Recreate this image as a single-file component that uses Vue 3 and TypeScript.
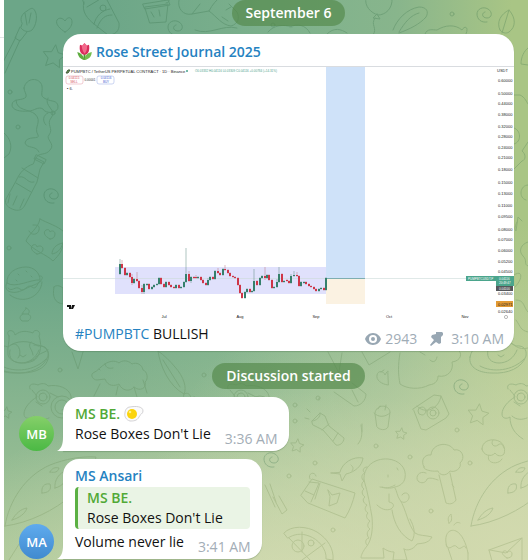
<script setup lang="ts">
type Step = [x: number, open: number, close: number, high?: number, low?: number]

interface Candle {
  x: number
  top: number
  height: number
  high: number
  low: number
  up: boolean
}

// Daily moves in chart units: x, open, close and, where they stand out, the wick ends.
const steps: Step[] = [
  [57, 208, 198, 193], [59, 198, 202, 194], [62, 202, 209], [64, 209, 207], [67, 207, 211],
  [69, 211, 217, 208, 219], [71, 217, 213], [74, 213, 215, 206], [76, 215, 222], [79, 222, 226, 219, 228],
  [81, 226, 218, 217, 228], [84, 219, 218], [86, 218, 223], [89, 223, 221], [91, 221, 219],
  [94, 219, 218], [96, 218, 212, 211], [98, 212, 218], [101, 218, 221], [103, 221, 216],
  [106, 216, 219], [108, 219, 221], [111, 221, 222], [113, 222, 219], [116, 219, 222],
  [118, 222, 221], [121, 221, 216], [123, 216, 208, 182], [126, 208, 215, 205], [128, 215, 211, 210, 217],
  [131, 211, 212], [133, 211, 212, 209], [135, 212, 211], [138, 211, 214], [140, 214, 217],
  [143, 217, 219], [145, 219, 214, 212, 220], [147, 214, 211], [150, 211, 213], [152, 213, 205],
  [155, 205, 207, 202], [157, 207, 209], [160, 209, 203], [162, 203, 204, 199], [165, 204, 207],
  [167, 207, 210], [170, 210, 211], [172, 211, 212], [175, 212, 219], [177, 219, 227],
  [179, 227, 232, 226, 233], [182, 232, 226], [184, 226, 223], [187, 223, 226], [189, 226, 225],
  [191, 225, 215, 203], [194, 215, 219], [197, 219, 212], [199, 212, 210], [202, 210, 212, 201, 214],
  [204, 212, 209], [206, 209, 214], [209, 214, 222], [211, 222, 221], [214, 221, 216, 213],
  [216, 216, 208, 201], [219, 208, 216], [221, 216, 215], [224, 214, 215], [226, 215, 217],
  [228, 217, 210, 208], [231, 210, 209, 205], [234, 209, 210, 206], [236, 210, 220], [238, 220, 216],
  [241, 217, 216], [243, 216, 218], [246, 218, 220], [248, 220, 221], [251, 221, 223],
  [253, 223, 225], [256, 225, 223, 222, 226], [258, 223, 222], [261, 222, 224], [263, 224, 212, 211, 225],
]

const candles: Candle[] = steps.map(([x, open, close, high, low]) => ({
  x,
  top: Math.min(open, close),
  height: Math.max(1, Math.abs(close - open)),
  high: high ?? Math.min(open, close) - 1,
  low: low ?? Math.max(open, close) + 1,
  up: close < open,
}))

const prices: { y: number; label: string }[] = [
  { y: 16, label: '0.60000' }, { y: 29, label: '0.50000' }, { y: 39, label: '0.44000' },
  { y: 50, label: '0.38000' }, { y: 62, label: '0.32000' }, { y: 72, label: '0.28000' },
  { y: 83, label: '0.24000' }, { y: 93, label: '0.21000' }, { y: 105, label: '0.18000' },
  { y: 118, label: '0.15000' }, { y: 129, label: '0.13000' }, { y: 141, label: '0.11000' },
  { y: 152, label: '0.09500' }, { y: 165, label: '0.08000' }, { y: 175, label: '0.07000' },
  { y: 186, label: '0.06000' }, { y: 197, label: '0.05200' }, { y: 207, label: '0.04500' },
  { y: 229, label: '0.03400' }, { y: 247, label: '0.02640' },
]

const months = [
  { x: 101, label: 'Jul' }, { x: 177, label: 'Aug' }, { x: 253, label: 'Sep' },
  { x: 326, label: 'Oct' }, { x: 402, label: 'Nov' },
]

const dots: [number, number][] = [
  [10, 92], [53, 113], [18, 127], [9, 248], [60, 370], [204, 375], [452, 14], [273, 25],
  [315, 463], [295, 421], [376, 446], [410, 457], [457, 430], [470, 463], [333, 530],
  [431, 511], [289, 476], [295, 405], [318, 398],
]
const stars: [number, number, number][] = [
  [54, 57, 12], [478, 415, 11], [401, 434, 6], [297, 446, 7], [6, 413, 6],
]
const swirls: [number, number][] = [[51, 195], [175, 27], [484, 14], [461, 386], [271, 459]]

function starPath(cx: number, cy: number, r: number): string {
  const points = Array.from({ length: 10 }, (_, i) => {
    const a = (Math.PI / 5) * i - Math.PI / 2 + 0.15
    const d = i % 2 ? r * 0.5 : r
    return `${(cx + d * Math.cos(a)).toFixed(1)} ${(cy + d * Math.sin(a)).toFixed(1)}`
  })
  return `M${points.join('L')}Z`
}
</script>

<template>
  <div class="page">
    <main class="chat">
      <svg class="doodles" viewBox="0 0 528 560" preserveAspectRatio="xMinYMin slice" aria-hidden="true">
        <defs>
          <linearGradient id="ink" gradientUnits="userSpaceOnUse" x1="0" y1="0" x2="120" y2="560">
            <stop offset="0" stop-color="#2f6b45" />
            <stop offset=".6" stop-color="#4b7d50" />
            <stop offset="1" stop-color="#7f955a" />
          </linearGradient>
          <g id="bear">
            <path d="M30 389c-2-5 3-6 8-4c3-2 8-2 10 1c10-2 21 2 23 10c1 8-3 12-9 14M32 390c2 3 4 4 5 7c-7 4-13 11-13 17c0 5 5 5 8 3c0 10 5 17 13 22" />
            <circle cx="43" cy="397" r="7" /><circle cx="43" cy="397" r="4" />
            <circle cx="62" cy="407" r="11" /><circle cx="62" cy="407" r="7" />
            <path d="M50 393l8 4M36 402l6 4M34 416c4 4 10 4 15 2" />
          </g>
          <g id="leaf">
            <path d="M5 526c4-25 20-50 45-61c15-6 32-9 46-8c-3 13-12 27-24 38c-17 15-43 28-67 31Z" />
            <path d="M12 520c4-7 9-11 15-12c-2 6-8 10-15 12ZM42 493c-1-6 2-10 8-9c2 6-2 9-8 9ZM55 488c-1-8 4-15 12-18c1 9-3 16-12 18ZM50 472c2-4 5-5 9-4c-1 4-4 5-9 4Z" />
          </g>
          <g id="cat">
            <path d="M-8 357c2-10 9-13 16-10c8-7 22-7 30-1c8-1 11 4 10 10c-4 12-18 18-34 17c-12 0-24-5-22-16Z" />
            <path d="M10 350c-2 8 3 13 11 13s15-5 18-13M2 366c12 7 33 5 44-7M20 355l3 2l3-2" />
          </g>
        </defs>

        <circle v-for="([x, y], i) in dots" :key="'d' + i" :cx="x" :cy="y" r="2" />
        <path v-for="([x, y, r], i) in stars" :key="'s' + i" :d="starPath(x, y, r)" />
        <path
          v-for="([x, y], i) in swirls" :key="'w' + i" :transform="`translate(${x} ${y})`"
          d="M3 8c-6 1-10-3-10-8s6-8 11-5s4 9-1 9s-6-5-2-6"
        />

        <!-- brush, heart, pencil, cactus -->
        <path d="M22 23c-3-5 1-10 5-12c4-3 6-4 8 0c3 5 1 15-3 19c-4 3-9 1-11-2ZM20 27l-5 11l5 3l7-9M16 37L-1 70M20 40L5 73M25 13l2 12M31 13l-2 10" />
        <path d="M65 32c-5-3-10-8-8-12c2-3 6-2 8 1c3-5 7-4 7 1c0 4-3 8-7 10Z" />
        <path d="M84 2c-3 10 4 17 10 22l14 11c7 0 12-4 11-12L106-2M87 7l15-9M94 24c2-8 8-14 16-15M97 28c4-10 8-13 15-13M84 4l-2-6M100 8a3 3 0 1 0 6 0a3 3 0 1 0-6 0" />
        <path d="M145 7l23-3l-2 18l-16 1ZM143 4l25-4l2 5l-25 4ZM147-3c-8 1-9-7-5-10M162 0c7-4 10 2 4 3M151 12l3 5M159 10l1 6" />
        <path d="M179 0c-2 8 4 16 13 14l17-3c3-6 8-12 13-15M192 14l8-10M209 11c8 6 13 14 22 15c7-2 9-8 6-14l-8-8M222 17l6 4M226 10l5-3M195 30c15 6 27-6 42-2" />
        <path d="M290 27c7-4 16-2 20 6M268 32c6-7 15-8 24-5M327 34c7-7 14-5 20-1" />

        <!-- balloon, leaf, airship -->
        <path d="M366-2c-2 8 5 15 12 17c7 0 15-6 14-17M377 14l-4 4l7 1l-3-5M375 18c-5 7 3 10-2 17" />
        <path d="M393 30c4-11 14-21 26-23c8 0 10 5 7 10c-6 7-16 12-27 16M399 32c6-10 12-17 20-19M425 34c2-6 8-4 12-4c8-5 18-6 25 0c3-5 7-3 4 4" />
        <path d="M500 30c-4-8 1-16 9-20c7 8 7 17 0 22c-3 2-7 1-9-2ZM509 10l-7 23M528 48c-4 3-7 9-7 16l7 1" />

        <!-- balloon dog, bottle, pillow -->
        <path d="M24 88c2-11 16-11 18-2c1 7-3 10 4 13c6 3 11 1 12 7c1 8-13 8-15 3c-5-3-9 2-14 2c-9 1-17-1-17-6c0-7 11-4 14-8c1-3-2-5-2-9ZM48 113c-5 2-6 8-2 12" />
        <path d="M16 100c0 11 13 9 19 14c8 8-2 13 3 21c3 5-12 0-13 8c2 6 11 2 14 9M48 98c-5 8 10 12 3 20c-5 6 3 11-2 17c-4 4 7 9 1 15c-4 6-12 2-14 8" />
        <path d="M36 158l8 4l-4 7l-3 13l-12 23c-2 4-5 6-10 5c-7-2-11-6-9-11l10-18c4-9 9-14 17-17ZM36 155l-2 4l10 5l2-4ZM22 168l16 10M16 183l15 9M19 177c7-2 8 7 15 5M10 194l-2 9M17 196l-4 9M24 199l-4 9" />
        <path d="M40 219c7 4 18 7 24 13c-1 9 2 17-11 29c-7-7-18-9-27-20c3-8 12-12 14-22ZM50 239c-6-3-7-7-4-9c2-1 4 0 4 2c2-2 5-1 5 2s-2 5-5 5ZM37 254c-6-3-7-7-4-9c2-1 4 0 4 2c2-2 6-1 6 2c0 3-3 5-6 5ZM33 225c4 0 7 0 6 5s-8 6-10 1M63 243c-8 1-11 7-11 11c5-1 9-4 11-11M4 133c6 5 9 13 5 21l-5 4" />
        <!-- burger, poop, hamster -->
        <path d="M7 283c-1-10 9-16 19-16c8 0 14 6 14 13c-9-1-25 9-33 3ZM40 276c6 0 0 7-6 9c-9 3-15 9-23 7c-6-1-6-7-4-9M8 288c4 5 7-3 12 1s7-6 12-2s5-6 9-6M10 295c13 10 31 2 32-13M18 274l1 1M26 271l1 1M31 276l1 1M16 280l1 1" />
        <path d="M26 308c5 2 3 5 2 6c4 2 3 5 0 7H22c-4-3-1-6 1-7c-1-3 3-3 3-6ZM22 314h6M54 287c2-2 5-2 9 1v16c-8-1-11-7-9-17Z" />
        <path d="M9 336c-5-6 5-8 6-1c6-5 12-4 18-2c1-5 9-2 6 3c4 12 0 22-6 25c-9 4-23 2-25-6c-1-8 2-14 1-19ZM31 342c-4 5 1 6 2 13M34 345c10-1 17 6 14 14c-4 15-27 16-44 12M48 350c-6 4-10 3-13 9l-10 4M11 345c7-5 12 8 7 13" />

        <use href="#bear" /><use href="#bear" x="198" />
        <use href="#leaf" />
        <use href="#cat" />
        <g transform="translate(478 0)"><use href="#bear" /></g>
        <g transform="translate(466 0)"><use href="#leaf" /></g>
        <g transform="translate(478 0)"><use href="#cat" /></g>

        <!-- sheep, carrot, ice cream -->
        <path d="M105 364c-4 2-7 7-12 9c-3 2 0 7 4 7l8-1c3 8 10 7 14 5c3 7 11 8 15 3c6 5 13 1 11-5c4-3 2-11-2-12c-1-6-7-8-11-6c-4-4-10-4-13-1c-4-3-10-2-14 1ZM105 364c1 4 4 5 8 4M99 369l1 1M100 384l-6 12M118 386l-2 9M134 387l3 10M143 380l4 13M72 352l6 17l5-17" />
        <path d="M158 351c2 15 11 35 26 43c3-6 0-17-9-27c-5-6-11-12-17-16ZM163 360l17 27M184 394c-2 4 2 5 4 4c5 1 6-3 8 0M184 394c4-2 6 0 7 4" />
        <path d="M328 352l13 25l4-3M338 378l4-25M334 392l20 14c7 0 12-6 12-12l-14-11M352 390l6 12M362 352l7 13l21-13" />

        <!-- cloud, heart, mug, envelope with cogs -->
        <path d="M400 353c-2 12-2 21 0 31c7 5 20 6 29 1c8-1 9-6 9-9c10 2 16-6 14-14c9-1 11-9 6-12M430 360c3 3 6 2 7-3M420 352l5 3" />
        <path d="M388 385c-7-1-12-5-11-10s7-4 8 0c2-4 4-5 3-3ZM381 372l3-2" />
        <path d="M375 413c1-9 14-9 15-1l-2 15c-2 4-9 3-11 0ZM374 413c5 5 11 4 16 0M378 409l2-3M385 410l1-5" />
        <path d="M413 409l21-14l7 1l8 18l-3 4l-20 12l-5-1l-7-18ZM417 406c8 9 22 3 24-10" /><circle cx="422" cy="411" r="4" /><circle cx="433" cy="413" r="6" /><circle cx="433" cy="413" r="3" />

        <!-- torch, fish, mushroom, tree -->
        <path d="M312 421l8-8l5 3l4 10l15 12c0 5-5 8-8 7l-13-15l-10-5ZM312 421c4 0 9-4 8-8M322 430l7-6M333 441l5-8M319 398v2M307 409l3 3M305 418l4 1M358 444c5-6 4-12 3-19M362 432v-8" />
        <path d="M340 472c2-9 13-16 23-14c-1 8-8 14-17 16l-4 7l-2-7l-9-1ZM351 465c2 2 3 3 1 6" />
        <path d="M482 449c0-7 7-10 13-9c8 1 11 8 9 14c-3 3-7 2-9-1c-4 5-12 2-13-4ZM489 455c-4 8 9 11 13 4M493 440c-3 4 1 8 5 5s5 1 6 3" />
        <path d="M424 467c-4-7 1-13 7-12c1-12 18-14 23-5c8-2 12 8 6 13c2 5-5 10-10 8c-4 6-11 4-12 0c-7 1-16-2-14-4ZM439 475l7 28c5 2 8 0 10-3l-6-27M426 473c-7-3-11 4-8 8c3 3 8 2 9-2c3-2 8 0 11 1M452 485l2 2" />

        <!-- dinosaur -->
        <path d="M364 480c-1-13 10-22 24-21c11 1 19 9 17 19c-1 5-5 8-10 9c-5 2-10 1-15 0M382 487c5 2 10 0 13-2M388 475v2M397 468l1 2M395 488c2 3 2 8 5 12c6 9 8 25 15 33c4 3 10 2 17 4c-4 7-10 6-15 7c-4 6-10 7-13 5M364 480c4 13 6 26 8 37c1 11 0 22-5 29c-4 5-6 9-6 12h23l-1-10c4 3 8 4 11 4l-1 8h14l-3-11M389 494v8c5 1 6 4 2 7c-5 2-10 0-14-4M392 510c2 14 9 26 20 31c4-7 2-15-2-22M402 495c2-4 8-2 7 3c-1 4-6 6-8 3M367 467c-4 0-5 4-2 6c-4 1-4 6-1 8c-3 2-3 6 0 8c-3 2-2 6 1 8c-3 2-2 6 2 8c-3 3-2 6 1 8c-3 3-1 6 2 8c-3 3-3 6 0 8c-4 3-3 7-1 9c-4 1-4 5-2 7" />
        <!-- jar, pizza, lolly, letter, fork -->
        <path d="M301 495l11-16l43 14c-2 9-5 17-10 25l-37-15ZM309 482l10 1l-8 19M310 479c-3-6 5-8 6-3M320 483l-5 16M328 490l4 5l8-2l-3 10l-8 3l1-9ZM305 491l9 4" />
        <path d="M284 533c7-8 23-7 33-1c11 7 17 17 16 28l-7-1c1-10-8-20-17-23c-8-3-15-2-21 2ZM289 538l23 24M302 532v20M325 543l-23 17" /><circle cx="298" cy="546" r="6" /><circle cx="311" cy="543" r="3" />
        <path d="M447 547c-4-12 2-19 9-16c6 3 10 12 12 22M446 545c4 8 7-3 11 2s7-5 9 1M448 548l5 15M468 553v8M449 523c-2-5 0-7 2-9c1 5 1 8-2 9ZM454 525c2-3 4-3 6-2" />
        <path d="M489 550l33-12v25M489 550l3 11M490 550l16 3l16-15M507 558c-5-3-6-6-3-7c2-1 3 1 3 2c2-3 5-2 5 1s-2 4-5 4Z" />
        <path d="M265 485l10 22M270 484l6 18M273 497l9 17l5-4l-8-14M9 560l12-19l17 10v9" />
        <!-- right edge -->
        <path d="M514 95l6 0c5 2 7 8 8 9M514 128c7 2 8 14 0 16M514 169l8-8c4-1 4-7 0-10l6-9M528 185c-8 0-10 13-2 15M517 222c-3 6-2 8-1 9l2-14l4 4M528 242c-7 2-10 9-5 14s0 8 5 10M514 275c9-6 9 4 1 12M516 300c9 0 7 7 12 12M506 340c8 4 12 11 22 8M516 320c5 7 4 10 12 12" />
      </svg>

      <div class="feed">
        <p class="pill">September 6</p>

        <article class="post">
          <h1 class="post-title">
            <svg class="tulip" viewBox="0 0 16 20" aria-hidden="true">
              <path d="M8 9v10" stroke="#4b9a35" stroke-width="2" />
              <path d="M8 19C3 18 1 15 0 10c4 1 7 4 8 9Z" fill="#5eac3f" />
              <path d="M8 19c0-5 3-8 8-9c0 5-3 8-8 9Z" fill="#75bd4e" />
              <path d="M3 2l3 1l2-3l2 3l3-1c1 5 0 11-5 11S2 7 3 2Z" fill="#d92d5b" />
              <path d="M5 3l3-3l3 3c0 4-1 7-3 9C6 9 5 6 5 3Z" fill="#f2688a" />
            </svg>
            <a href="#channel">Rose Street Journal 2025</a>
          </h1>

          <svg class="chart" viewBox="0 0 451 254" role="img" aria-label="PUMPBTC daily price chart">
            <rect width="451" height="254" fill="#fff" />
            <path d="M0 .5h451" stroke="#d9dce0" />
            <path d="M3 7l2-3l2 0l-2 3z" fill="#6b9a55" stroke="#465b3b" />
            <text x="8" y="7" class="symbol">PUMPBTC / TetherUS PERPETUAL CONTRACT · 1D · Binance</text>
            <circle cx="124" cy="5" r="1" fill="#4ba58c" />
            <text x="132" y="6" class="ohlc">O0.03332 H0.04116 L0.03309 C0.04116 +0.00784 (+14.31%)</text>
            <rect x="3" y="10" width="17" height="8" rx="2" fill="#fff" stroke="#e8aab3" stroke-width=".6" />
            <text x="11" y="13" class="quote-sell">0.04115</text><text x="11" y="17" class="quote-sell">SELL</text>
            <text x="27" y="15" class="spread">0.00001</text>
            <rect x="34" y="10" width="17" height="8" rx="2" fill="#fff" stroke="#aab8ea" stroke-width=".6" />
            <text x="43" y="13" class="quote-buy">0.04116</text><text x="43" y="17" class="quote-buy">BUY</text>
            <text x="4" y="24" class="spread-start">▪ 6.</text>

            <rect x="52" y="201" width="211" height="27" fill="#e0e1fc" />
            <rect x="263" y="1" width="39" height="211" fill="#cfe2f9" />
            <rect x="263" y="212" width="39" height="26" fill="#fbf2e2" />
            <path d="M0 212.5h263m39 0h103" stroke="#cbdad9" stroke-width=".6" />
            <path d="M263 212.5h39" stroke="#7eaeb0" />
            <g v-for="c in candles" :key="c.x" :class="c.up ? 'up' : 'down'">
              <path :d="`M${c.x} ${c.high}V${c.low}`" />
              <rect :x="c.x - 1" :y="c.top" width="2" :height="c.height" />
            </g>

            <text x="434" y="6" class="axis">USDT</text>
            <text v-for="p in prices" :key="p.y" x="435" :y="p.y" class="axis">{{ p.label }}</text>
            <text v-for="m in months" :key="m.label" :x="m.x" y="252" class="month">{{ m.label }}</text>
            <rect x="403" y="210" width="30" height="5" fill="#4ba58c" />
            <text x="405" y="214" class="tag">PUMPBTCUSDT.P</text>
            <rect x="433" y="210" width="18" height="10" fill="#4ba58c" />
            <text x="436" y="214" class="tag">0.04116</text><text x="436" y="218" class="tag">20:49:47</text>
            <rect x="433" y="220" width="17" height="5" fill="#55575b" />
            <text x="436" y="224" class="tag">0.04100</text>
            <rect x="433" y="235" width="17" height="6" fill="#e29a34" />
            <text x="435" y="240" class="axis">0.02971</text>
            <circle cx="443" cy="251" r="1.6" fill="none" stroke="#777" stroke-width=".5" />
            <path d="M4 239h4v4H6v-2H4zM9 239h3l-2 4H8z" fill="#111" />
          </svg>

          <div class="caption">
            <p class="text"><a href="#pumpbtc">#PUMPBTC</a> BULLISH</p>
            <div class="meta">
              <svg class="eye" viewBox="0 0 16 12" aria-hidden="true">
                <path fill="#98a7b3" fill-rule="evenodd" d="M8 0c4 0 7 3 8 6c-1 3-4 6-8 6S1 9 0 6c1-3 4-6 8-6Zm0 2a4 4 0 1 0 0 8a4 4 0 0 0 0-8Zm0 2a2 2 0 1 1 0 4a2 2 0 0 1 0-4Z" />
              </svg>
              <span>2943</span>
              <svg class="pin" viewBox="0 0 14 14" aria-hidden="true">
                <path fill="#98a7b3" d="M7 0h6l1 1v2l-2 2l0 6l-2 1l-3-2l-5 4l-1-1l4-5l-3-3l1-2l4-1Z" />
              </svg>
              <time>3:10 AM</time>
            </div>
          </div>
        </article>

        <p class="pill">Discussion started</p>

        <div class="row">
          <span class="avatar green">MB</span>
          <article class="bubble">
            <h2 class="name green-text">
              MS BE.
              <svg class="egg" viewBox="0 0 20 16" aria-hidden="true">
                <path d="M6 1c5-1 13-1 13 4c0 3-3 3-4 6c-2 4-6 4-9 4c-4-1-6-5-5-8c0-3 2-6 5-6Z" fill="#fbfbfb" stroke="#d3d2d5" />
                <circle cx="8" cy="8" r="5" fill="#fbd40d" /><circle cx="6" cy="6" r="1.3" fill="#ffef86" />
              </svg>
            </h2>
            <div class="line">
              <p class="text">Rose Boxes Don't Lie</p>
              <time class="stamp">3:36 AM</time>
            </div>
            <svg class="tail" viewBox="0 0 12 14" aria-hidden="true"><path d="M6 0h6v14H0c4-2 6-6 6-14Z" fill="#fff" /></svg>
          </article>
        </div>

        <div class="row">
          <span class="avatar blue">MA</span>
          <article class="bubble">
            <h2 class="name blue-text">MS Ansari</h2>
            <blockquote class="reply">
              <strong class="name green-text">MS BE.</strong>
              <p class="text">Rose Boxes Don't Lie</p>
            </blockquote>
            <div class="line">
              <p class="text">Volume never lie</p>
              <time class="stamp">3:41 AM</time>
            </div>
            <svg class="tail" viewBox="0 0 12 14" aria-hidden="true"><path d="M6 0h6v14H0c4-2 6-6 6-14Z" fill="#fff" /></svg>
          </article>
        </div>
      </div>
    </main>
  </div>
</template>

<style>
html,
body {
  height: 100%;
  overflow: hidden;
}
</style>

<style scoped>
.page {
  height: 100vh;
  padding-left: 4px;
  overflow: hidden;
  background: linear-gradient(#e3e5e6, #e3e5e6) 0 37px / 4px 1px no-repeat #fff;
  font-family: "Open Sans", "Noto Sans", sans-serif;
  font-size: 14px;
  line-height: 18px;
  color: #111;
}

.chat {
  position: relative;
  height: 100%;
  overflow: hidden;
  background:
    radial-gradient(ellipse 75% 60% at 100% 100%, #d3daaf 0%, rgba(211, 218, 175, 0) 100%),
    radial-gradient(ellipse 75% 36% at 55% 106%, #d3dbb2 0%, rgba(211, 219, 178, 0) 100%),
    linear-gradient(180deg, rgba(160, 192, 145, 0) 50%, rgba(180, 205, 155, 0.85) 100%),
    linear-gradient(90deg, #6ca688 0%, #6ca688 18%, #7fb28d 55%, #88b58c 75%, #a9c585 97%);
}

.doodles {
  position: absolute;
  inset: 0 0 0 -4px;
  width: calc(100% + 4px);
  height: 100%;
  fill: none;
  stroke: url(#ink);
  stroke-width: 1;
  stroke-linecap: round;
  stroke-linejoin: round;
  opacity: 0.28;
}

.feed {
  position: relative;
  display: flex;
  flex-direction: column;
  padding: 0 14px 0 15px;
}

h1,
h2,
p,
blockquote {
  margin: 0;
  font-size: 14px;
  font-weight: 400;
}

a {
  color: #2582c1;
  text-decoration: none;
}

.pill {
  align-self: center;
  margin: 0 0 8px 44px;
  padding: 4px 14px;
  border-radius: 13px;
  background: rgba(84, 137, 75, 0.68);
  color: #fff;
  font-weight: 600;
}

.post {
  margin: 0 0 12px 44px;
  overflow: hidden;
  border-radius: 18px;
  background: #fff;
  box-shadow: 0 1px 1px rgba(60, 100, 60, 0.3);
}

.post-title {
  display: flex;
  align-items: center;
  gap: 3px;
  padding: 9px 13px 5px;
  font-weight: 600;
}

.tulip {
  width: 17px;
  height: 18px;
}

.chart {
  display: block;
  width: 100%;
  height: auto;
  font-family: "Liberation Sans", sans-serif;
  font-size: 4px;
}

.symbol { fill: #222; }
.ohlc { fill: #4e9f8c; font-size: 3px; }
.quote-sell { fill: #d34c5c; font-size: 3px; text-anchor: middle; }
.quote-buy { fill: #4561cf; font-size: 3px; text-anchor: middle; }
.spread { fill: #333; font-size: 3px; text-anchor: middle; }
.spread-start { fill: #333; }
.axis { fill: #222; }
.month { fill: #222; text-anchor: middle; }
.tag { fill: #fff; font-size: 3px; }

.up rect { fill: #35806c; }
.down rect { fill: #cf3548; }
.up path { stroke: #5d8a82; stroke-width: 0.5; }
.down path { stroke: #b9717f; stroke-width: 0.5; }

.caption {
  display: flex;
  align-items: flex-end;
  justify-content: space-between;
  padding: 5px 10px 3px 12px;
}

.caption .text {
  padding-bottom: 5px;
}

.meta {
  display: flex;
  align-items: center;
  gap: 4px;
  color: #a0acb6;
}

.eye {
  width: 16px;
  height: 12px;
}

.pin {
  width: 14px;
  height: 14px;
  margin: 0 4px 0 8px;
}

.row {
  display: flex;
  align-items: flex-end;
  gap: 9px;
  margin-bottom: 8px;
}

.avatar {
  display: flex;
  align-items: center;
  justify-content: center;
  width: 35px;
  height: 35px;
  border-radius: 50%;
  color: #fff;
  font-size: 13px;
  font-weight: 600;
}

.green { background: linear-gradient(#85cf69, #4bb944); }
.blue { background: linear-gradient(#5fabee, #408acf); }
.green-text { color: #51a936; }
.blue-text { color: #2582c1; }

.bubble {
  position: relative;
  padding: 8px 11px 0 12px;
  border-radius: 16px 16px 16px 0;
  background: #fff;
  box-shadow: 0 1px 1px rgba(60, 100, 60, 0.3);
}

.tail {
  position: absolute;
  bottom: 0;
  left: -6px;
  width: 12px;
  height: 14px;
}

.name {
  display: flex;
  align-items: center;
  gap: 4px;
  font-weight: 600;
}

.egg {
  width: 20px;
  height: 16px;
}

.line {
  display: flex;
  align-items: flex-end;
  gap: 14px;
}

.line .text {
  padding: 2px 0 8px;
}

.stamp {
  padding-bottom: 3px;
  color: #a3adb6;
}

.reply {
  margin: 2px 1px 2px 0;
  padding: 2px 8px 2px 9px;
  border-left: 3px solid #5bb043;
  border-radius: 4px;
  background: #eaf4e5;
}

.reply .text {
  padding-top: 2px;
}
</style>
